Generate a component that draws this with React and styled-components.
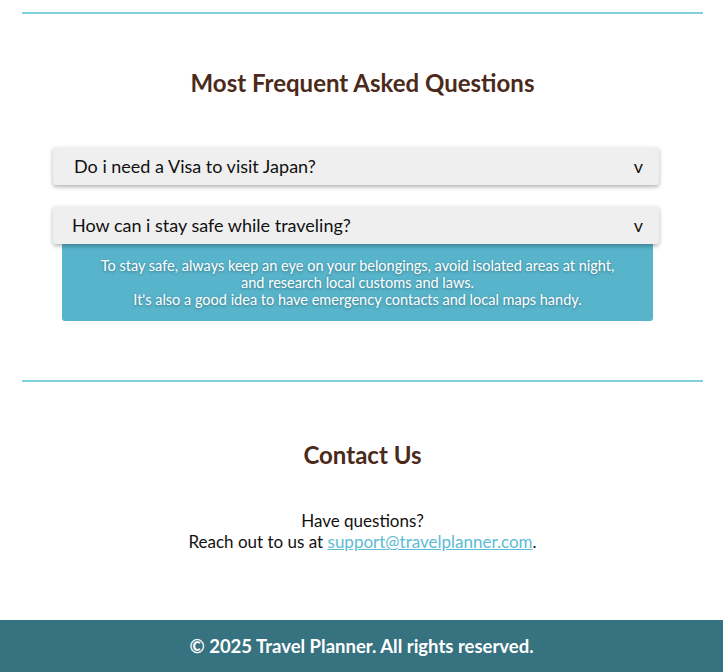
import React, { useState } from "react";
import styled, { createGlobalStyle } from "styled-components";

const Global = createGlobalStyle`
  body {
    margin: 0;
    background: #fff;
    font-family: Lato, "Open Sans", sans-serif;
    color: #111;
  }
`;

const Page = styled.div`
  display: flex;
  flex-direction: column;
  min-height: 672px;
`;

const Section = styled.section`
  padding: 12px 20px 0 22px;
`;

const Rule = styled.hr`
  margin: 0;
  border: 0;
  border-top: 2px solid #7fcfdd;
`;

const Title = styled.h2`
  margin: 0;
  text-align: center;
  color: #4b2a1a;
  font-size: 24px;
  font-weight: 700;
  line-height: 30px;
`;

const FaqTitle = styled(Title)`
  padding-top: 54px;
`;

const FaqList = styled.div`
  display: flex;
  flex-direction: column;
  gap: 21px;
  width: 606px;
  margin: 49px 0 0 31px;
  padding-bottom: 59px;
`;

const Item = styled.div`
  display: flex;
  flex-direction: column;
`;

const Question = styled.button`
  display: flex;
  align-items: center;
  justify-content: space-between;
  height: 38px;
  padding: 0 16px 0 ${(p) => p.$indent}px;
  border: 0;
  border-radius: 3px;
  background: #efefef;
  box-shadow: 0 2px 4px rgba(0, 0, 0, 0.3);
  font-family: inherit;
  font-size: 18px;
  color: #111;
  cursor: pointer;
  position: relative;
  z-index: 1;
`;

const Answer = styled.div`
  margin: 0 6px 0 9px;
  padding: 13px 12px 13px;
  background: #57b4cb;
  border-radius: 0 0 3px 3px;
  color: #fff;
  text-align: center;
  font-size: 14.5px;
  line-height: 17px;
  text-shadow: 0 1px 3px rgba(0, 0, 0, 0.35);
`;

const ContactTitle = styled(Title)`
  padding-top: 58px;
`;

const ContactText = styled.p`
  margin: 40px 0 0;
  text-align: center;
  font-size: 17px;
  line-height: 21px;
  padding-bottom: 68px;

  a {
    color: #5bbcd6;
  }
`;

const Footer = styled.footer`
  margin-top: auto;
  height: 52px;
  display: flex;
  align-items: center;
  justify-content: center;
  background: #36727f;
  color: #fff;
  font-size: 18.5px;
  font-weight: 700;
`;

const faqs = [
  {
    q: "Do i need a Visa to visit Japan?",
    indent: 21,
    a: null,
  },
  {
    q: "How can i stay safe while traveling?",
    indent: 19,
    a: [
      "To stay safe, always keep an eye on your belongings, avoid isolated areas at night,",
      "and research local customs and laws.",
      "It's also a good idea to have emergency contacts and local maps handy.",
    ],
  },
];

export default function App() {
  const [open, setOpen] = useState(1);
  return (
    <Page>
      <Global />
      <Section>
        <Rule />
        <FaqTitle>Most Frequent Asked Questions</FaqTitle>
        <FaqList>
          {faqs.map((f, i) => (
            <Item key={f.q}>
              <Question $indent={f.indent} onClick={() => setOpen(open === i ? -1 : i)}>
                <span>{f.q}</span>
                <span>v</span>
              </Question>
              {open === i && f.a && (
                <Answer>
                  {f.a.map((line) => (
                    <div key={line}>{line}</div>
                  ))}
                </Answer>
              )}
            </Item>
          ))}
        </FaqList>
        <Rule />
        <ContactTitle>Contact Us</ContactTitle>
        <ContactText>
          Have questions?
          <br />
          Reach out to us at{" "}
          <a href="mailto:support@travelplanner.com">support@travelplanner.com</a>.
        </ContactText>
      </Section>
      <Footer>© 2025 Travel Planner. All rights reserved.</Footer>
    </Page>
  );
}
